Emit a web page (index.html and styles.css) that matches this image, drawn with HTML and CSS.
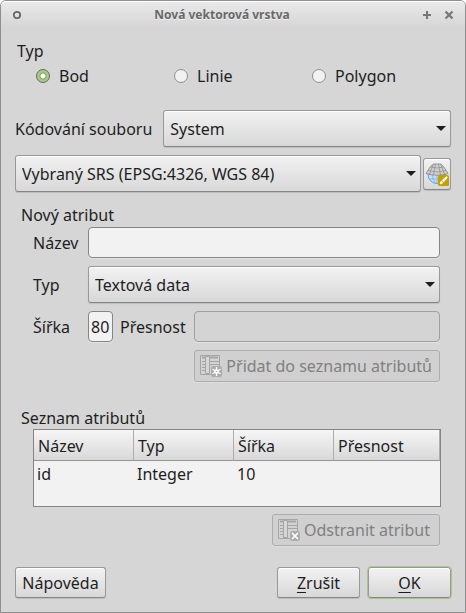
FILE: index.html
```html
<!DOCTYPE html>
<html lang="cs">
<head>
<meta charset="utf-8">
<title>Nová vektorová vrstva</title>
<link rel="stylesheet" href="styles.css">
</head>
<body>
<main class="window">
  <header class="titlebar">
    <button class="window-button" type="button" aria-label="Menu">
      <svg width="10" height="10" viewBox="0 0 10 10"><circle cx="5" cy="5" r="3.2" fill="none" stroke="#666" stroke-width="1.8"/></svg>
    </button>
    <h1 class="title">Nová vektorová vrstva</h1>
    <div class="window-actions">
      <button class="window-button" type="button" aria-label="Maximalizovat">
        <svg width="10" height="10" viewBox="0 0 10 10"><path d="M5 1v8M1 5h8" stroke="#777" stroke-width="2"/></svg>
      </button>
      <button class="window-button" type="button" aria-label="Zavřít">
        <svg width="10" height="10" viewBox="0 0 10 10"><path d="M1.500 1.500l7 7M8.500 1.500l-7 7" stroke="#777" stroke-width="2.200"/></svg>
      </button>
    </div>
  </header>

  <form class="content">
    <fieldset class="group">
      <legend class="legend legend-type">Typ</legend>
      <div class="radios">
        <label class="radio"><input type="radio" name="geometry" checked>Bod</label>
        <label class="radio"><input type="radio" name="geometry">Linie</label>
        <label class="radio"><input type="radio" name="geometry">Polygon</label>
      </div>
    </fieldset>

    <div class="row encoding">
      <label for="encoding">Kódování souboru</label>
      <div class="combo"><select id="encoding"><option>System</option></select></div>
    </div>
    <div class="row srs">
      <div class="combo"><select aria-label="SRS"><option>Vybraný SRS (EPSG:4326, WGS 84)</option></select></div>
      <button class="button icon-button" type="button" aria-label="Vybrat SRS">
        <svg width="24" height="24" viewBox="0 0 24 24">
          <path d="M3 12.500a9 9 0 0 0 18 0z" fill="#c3e2fa" stroke="#6a9ccc"/>
          <path d="M12 13v8.500M7.500 13q0 5 3 8M16.500 13q0 5-3 8M4.500 17h15" fill="none" stroke="#7dabd8" stroke-width=".8"/>
          <path d="M8.500 2h7l3 2.500L23 11.500q-11 3.500-22 0L5.500 4.500z" fill="#cfcfcf" stroke="#8a8c8f" stroke-width=".9"/>
          <path d="M5.500 5q6.500 2 13 0M3 8.500q9 3 18 0M10.500 2L8.500 13M13.500 2l2 11M8.500 2L4.500 12M15.500 2l4 10" fill="none" stroke="#8a8c8f" stroke-width=".7"/>
          <rect x="13" y="13" width="11" height="11" rx="1.500" fill="#c4a000"/>
          <path d="M15 22l1-3 2 2zM17 18.500l4.500-4 1 1-4 4.500z" fill="#fff" stroke="#fff" stroke-width=".6"/>
        </svg>
      </button>
    </div>

    <fieldset class="group attribute">
      <legend class="legend">Nový atribut</legend>
      <div class="fields">
        <label for="name">Název</label>
        <input class="text" id="name" type="text">
        <label for="type">Typ</label>
        <div class="combo"><select id="type"><option>Textová data</option></select></div>
        <label for="width">Šířka</label>
        <div class="sizes">
          <input class="text width" id="width" type="text" value="80">
          <label for="precision">Přesnost</label>
          <div class="precision-cell"><input class="text" id="precision" type="text" disabled></div>
        </div>
        <button class="button tool add" type="button" disabled>
          <svg width="22" height="22" viewBox="0 0 22 22">
            <path d="M.5.5h19v19H.5z" fill="#d3d3d3" stroke="#a5a5a5"/>
            <path d="M2 2.500h3M10 2.500h8" stroke="#a5a5a5" stroke-width="2"/>
            <path d="M2 6.500h3M10 6.500h9M2 9.500h3M10 9.500h9M2 12.500h3M2 15.500h3" stroke="#a5a5a5"/>
            <path d="M5.500 1.500h4v17h-4z" fill="#d6d6d6" stroke="#a5a5a5"/>
            <rect x="11" y="11" width="11" height="11" rx="2" fill="#adadad"/>
            <path d="M16.500 12v9M12.500 14.200l8 4.600M20.500 14.200l-8 4.600" stroke="#fff" stroke-width="1.300"/>
            <circle cx="16.500" cy="16.500" r="2.200" fill="#fff"/><circle cx="16.500" cy="16.500" r=".8" fill="#adadad"/>
          </svg>
          <span>Přidat do seznamu atributů</span>
        </button>
      </div>
    </fieldset>

    <section class="attributes">
      <h2 class="legend" id="list-title">Seznam atributů</h2>
      <div class="list">
        <table aria-labelledby="list-title">
          <thead><tr><th>Název</th><th>Typ</th><th>Šířka</th><th>Přesnost</th></tr></thead>
          <tbody><tr><td>id</td><td>Integer</td><td>10</td><td></td></tr></tbody>
        </table>
      </div>
      <button class="button tool" type="button" disabled>
        <svg width="22" height="22" viewBox="0 0 22 22">
          <path d="M.5.5h19v19H.5z" fill="#d3d3d3" stroke="#a5a5a5"/>
          <path d="M2 2.500h3M10 2.500h8" stroke="#a5a5a5" stroke-width="2"/>
          <path d="M2 6.500h3M10 6.500h9M2 9.500h3M10 9.500h9M2 12.500h3M2 15.500h3" stroke="#a5a5a5"/>
          <path d="M5.500 1.500h4v17h-4z" fill="#d6d6d6" stroke="#a5a5a5"/>
          <rect x="12" y="12" width="10" height="10" rx="2" fill="#adadad"/>
          <path d="M14 14l6 6M20 14l-6 6" stroke="#fff" stroke-width="1.600"/>
        </svg>
        <span>Odstranit atribut</span>
      </button>
    </section>

    <footer class="footer">
      <button class="button help" type="button">Nápověda</button>
      <button class="button action" type="button"><span><u>Z</u>rušit</span></button>
      <button class="button action default" type="submit"><span><u>O</u>K</span></button>
    </footer>
  </form>
</main>
</body>
</html>
```
FILE: styles.css
```css
* {
  box-sizing: border-box;
}

body {
  margin: 0;
  background: #fff;
  color: #1e1e1e;
  font: 16px/20px "Noto Sans", sans-serif;
}

button,
input,
select {
  margin: 0;
  color: inherit;
  font: inherit;
}

.window {
  border: 1px solid #8f8f8f;
  border-radius: 6px 6px 0 0;
  background: #d6d6d6;
}

.titlebar {
  display: grid;
  grid-template-columns: 10px 1fr 32px;
  align-items: center;
  height: 26px;
  padding: 0 11px;
  border-top: 1px solid #fff;
  border-radius: 5px 5px 0 0;
  background: linear-gradient(#e9e9e9, #d6d6d6);
}

.title {
  margin: 0;
  color: #696969;
  font-size: 12px;
  font-weight: bold;
  text-align: center;
  text-shadow: 0 1px #f0f0f0;
}

.window-button {
  display: flex;
  width: 10px;
  padding: 0;
  border: 0;
  background: none;
}

.window-actions {
  display: flex;
  justify-content: flex-end;
  gap: 12px;
}

.content {
  padding: 14px;
}

.group {
  min-width: 0;
  margin: 0;
  padding: 0;
  border: 0;
}

.legend {
  margin: 0;
  padding: 0 0 0 6px;
  font-size: 16px;
  font-weight: normal;
}

.legend-type {
  padding-left: 2px;
}

.radios {
  display: grid;
  grid-template-columns: repeat(3, 138px);
  margin: 5px 0 24px 21px;
}

.radio {
  display: flex;
  align-items: center;
  gap: 9px;
}

.radio input {
  width: 14px;
  height: 14px;
  border: 1px solid #8f8f8f;
  border-radius: 50%;
  background: #f2f2f2;
  appearance: none;
}

.radio input:checked {
  border-color: #666;
  background: radial-gradient(circle, #fff 2px, #7f9c66 3px, #a6cc80 4px);
}

.row {
  display: flex;
  align-items: center;
}

.encoding {
  gap: 11px;
  margin-bottom: 8px;
}

.encoding label {
  flex: 0 0 137px;
  white-space: nowrap;
}

.srs {
  gap: 2px;
}

.combo {
  position: relative;
  flex: 1;
}

.combo::after {
  position: absolute;
  top: 16px;
  right: 5px;
  border: 5px solid transparent;
  border-top-color: #1e1e1e;
  border-bottom: 0;
  content: "";
  pointer-events: none;
}

.combo select,
.button {
  border: 1px solid #999;
  border-bottom-color: #858585;
  border-radius: 3px;
  background: linear-gradient(#f2f2f2, #d8d8d8);
  box-shadow: inset 0 1px #fff, 0 1px 1px #bdbdbd;
}

.combo select {
  display: block;
  width: 100%;
  height: 37px;
  padding: 0 24px 0 6px;
  appearance: none;
}

.button {
  display: flex;
  align-items: center;
  justify-content: center;
  height: 31px;
  padding: 0 6px;
  white-space: nowrap;
}

.icon-button {
  width: 28px;
  height: 32px;
  padding: 0;
}

.attribute {
  margin-top: 13px;
}

.fields {
  display: grid;
  grid-template-columns: 55px 1fr;
  gap: 8px 0;
  align-items: center;
  margin: 2px 11px 0 18px;
}

.text {
  width: 100%;
  height: 31px;
  padding: 0 6px;
  border: 1px solid #858585;
  border-radius: 4px;
  background: #f2f2f2;
  box-shadow: 0 1px #e4e4e4;
}

.text:disabled {
  border-color: #9f9f9f;
  background: #d4d4d4;
}

.sizes {
  display: grid;
  grid-template-columns: 25px 67px 1fr;
  column-gap: 7px;
  align-items: center;
}

.text.width {
  padding: 0 2px;
}

.precision-cell {
  display: flex;
}

.tool {
  justify-self: end;
  gap: 4px;
  height: 32px;
  padding: 0 8px 0 5px;
  border-color: #adadad;
  background: #d0d0d0;
  box-shadow: 0 1px #dedede;
  color: #808080;
}

.add {
  grid-column: 2;
  padding-right: 7px;
}

.attributes {
  display: flex;
  flex-direction: column;
  margin-top: 26px;
}

.list {
  min-height: 78px;
  margin: 1px 10px 7px 18px;
  border: 1px solid #858585;
  background: #f2f2f2;
}

table {
  width: 100%;
  border-collapse: separate;
  border-spacing: 0;
  table-layout: fixed;
}

th {
  width: 100px;
  height: 31px;
  padding: 2px 4px 0;
  border-right: 1px solid #adadad;
  border-bottom: 1px solid #949494;
  background: linear-gradient(#f6f6f6, #d8d8d8);
  font-weight: normal;
  text-align: left;
}

th:last-child {
  width: auto;
}

td {
  height: 26px;
  padding: 0 3px;
}

.attributes .tool {
  align-self: flex-end;
  margin-right: 11px;
  padding-right: 9px;
}

.footer {
  display: flex;
  gap: 8px;
  margin-top: 21px;
}

.help {
  width: 91px;
  margin-right: auto;
}

.action {
  width: 83px;
}

.action u {
  text-underline-offset: 3px;
}

.default {
  outline: 1px solid #a9c78a;
}
```
